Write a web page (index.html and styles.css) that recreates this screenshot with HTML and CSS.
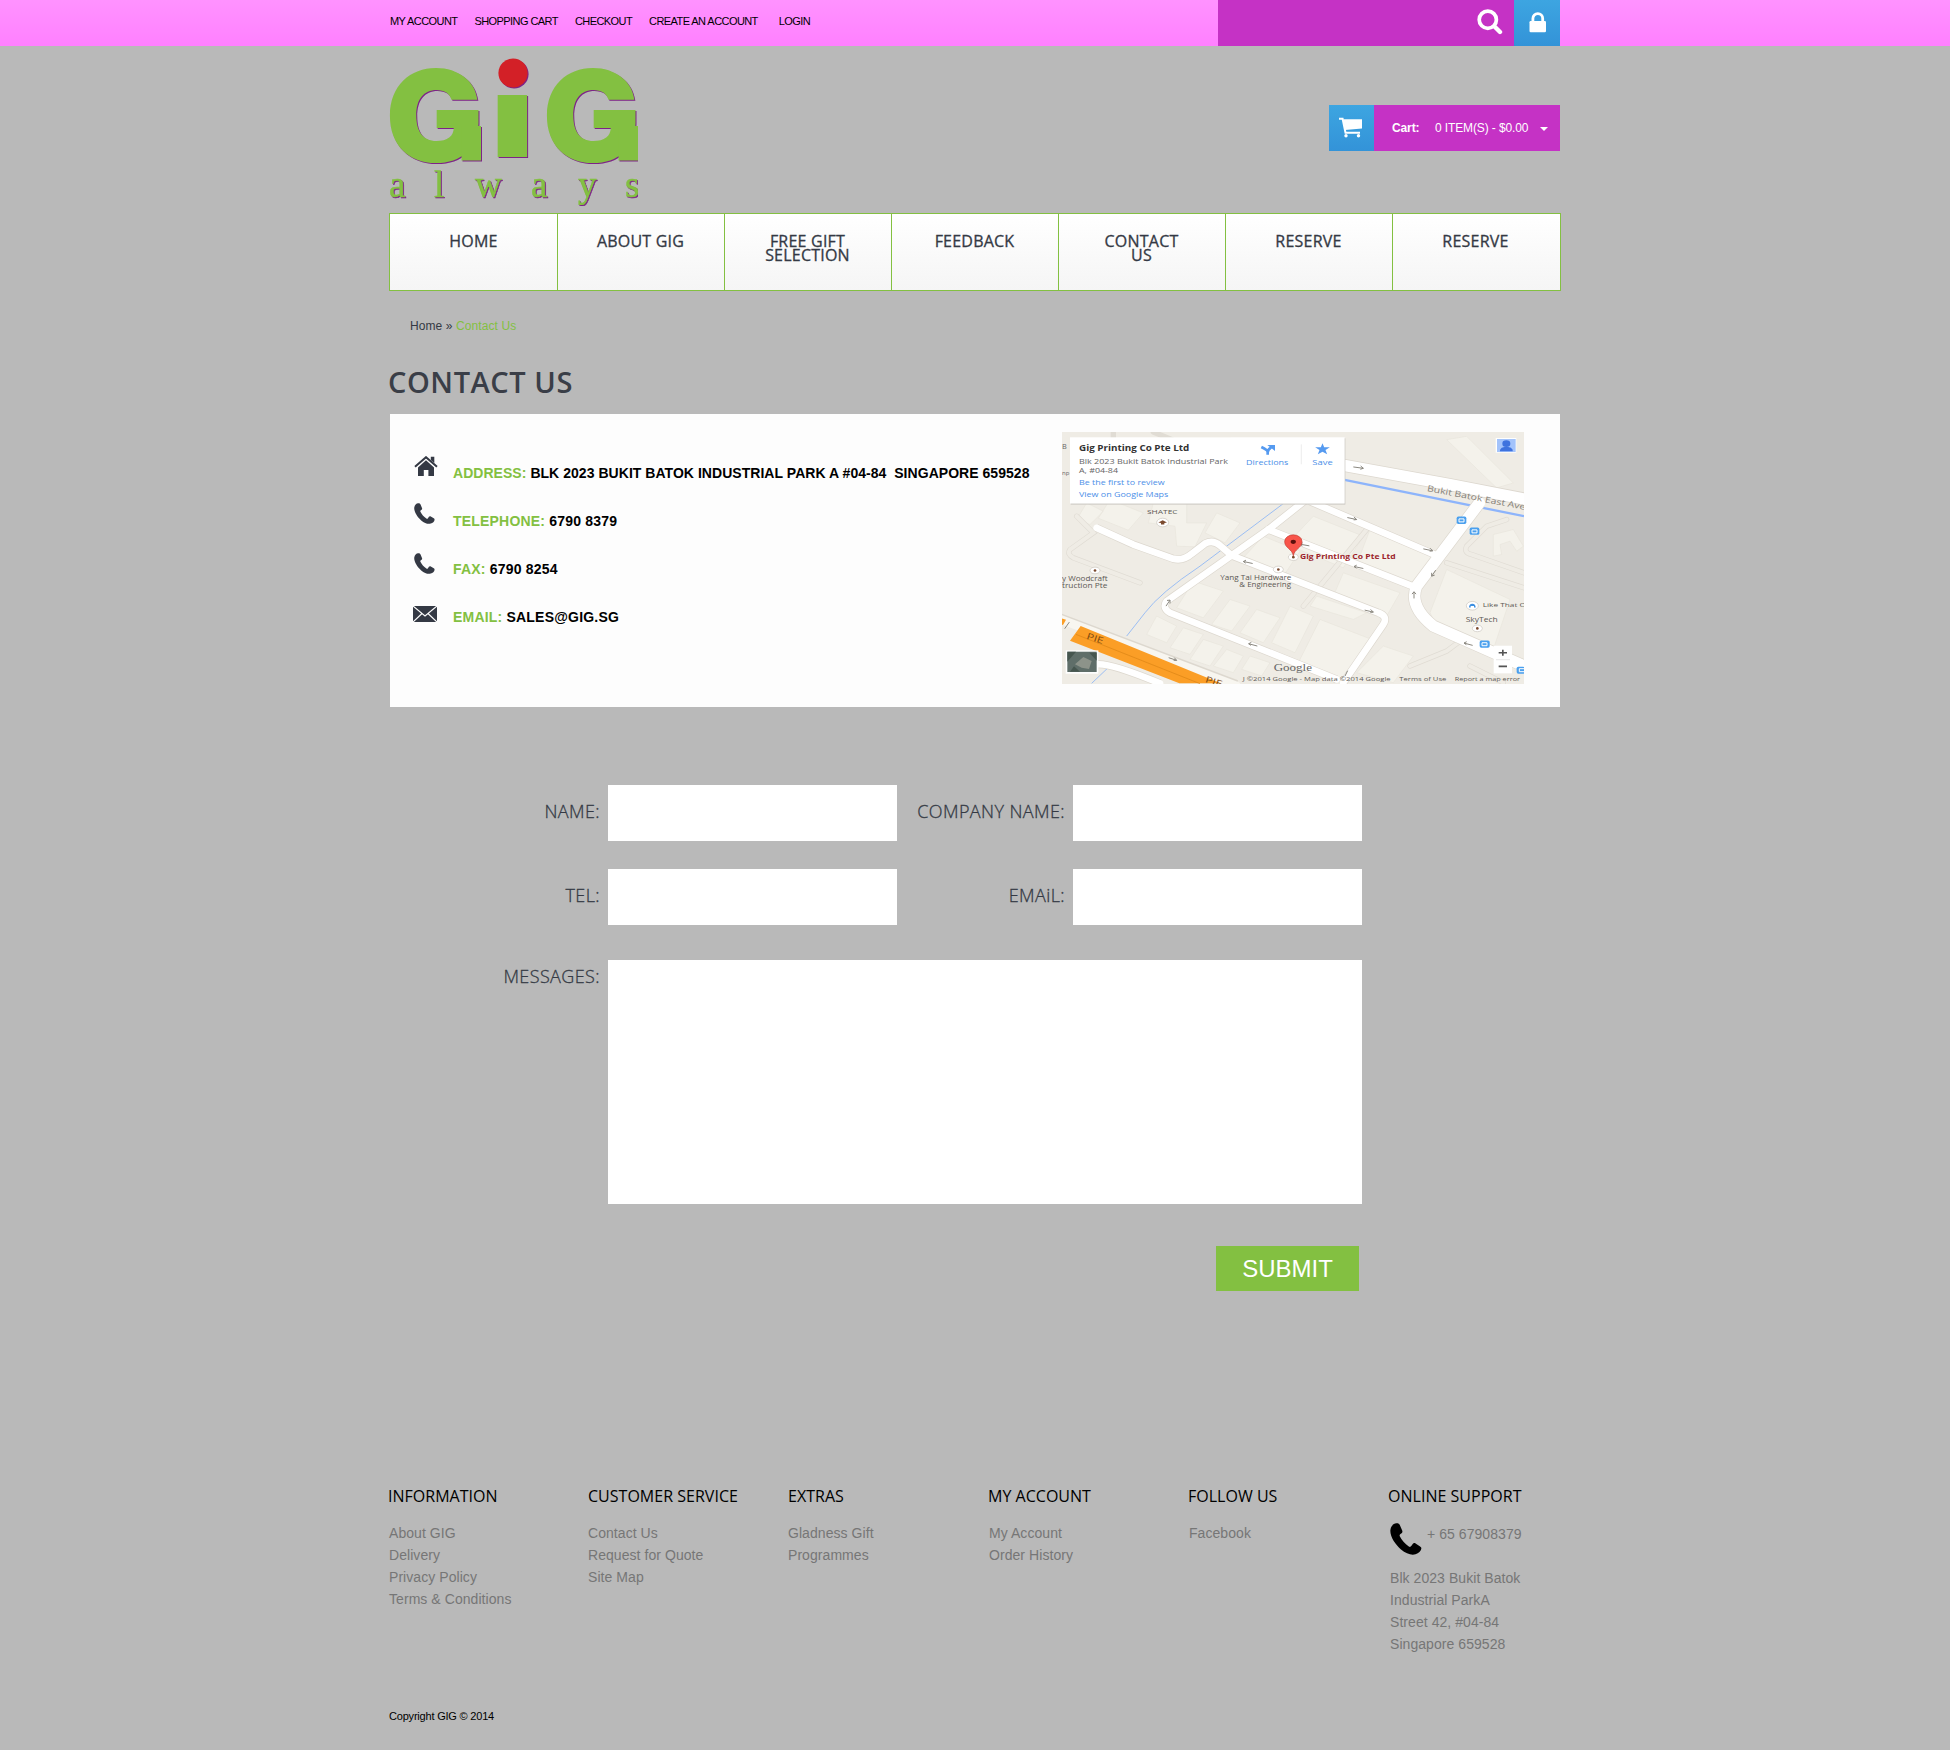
FILE: index.html
```html
<!DOCTYPE html>
<html lang="en">
<head>
<meta charset="utf-8">
<title>Contact Us - GIG</title>
<link rel="stylesheet" href="styles.css">
</head>
<body>
<svg class="defs" width="0" height="0">
  <symbol id="phone" viewBox="0 0 32 32"><path d="M6.3 .3C3.6 .6 1 2.600 .4 7c-.7 6 4.600 14.500 10.600 19.500C16 30.700 21.500 32.600 25.500 31.300c3.300-1 5.300-3 5.800-5.500.2-1.200-.3-1.800-1.200-2.400L25.600 20.500c-1.200-.7-2.200-.4-2.900.6l-1.400 2c-.7.9-1.500 1-2.500.4C15 21 11.500 17 9.800 13.300c-.4-1-.2-1.700.6-2.300l1.200-.8c.9-.7 1-1.500.6-2.600L9.800 2C9.300.8 8 .1 6.300.3z"/></symbol>
</svg>
<header>
  <div class="topbar">
    <div class="wrap topbar-in">
      <nav class="topnav"><a>MY ACCOUNT</a><a>SHOPPING CART</a><a>CHECKOUT</a><a>CREATE AN ACCOUNT</a><a>LOGIN</a></nav>
      <div class="search"><svg width="26" height="26" viewBox="0 0 26 26"><circle cx="10.800" cy="10.700" r="8.600" fill="none" stroke="#fff" stroke-width="3.700"/><path d="M17.500 17.500L23 23" stroke="#fff" stroke-width="4.400" stroke-linecap="round"/></svg></div>
      <div class="lock"><svg width="18" height="21" viewBox="0 0 18 21"><rect x=".5" y="9" width="16.500" height="11.300" rx="1.200" fill="#fff"/><path d="M3.900 10V6.500a4.900 4.900 0 0 1 9.800 0V10" fill="none" stroke="#fff" stroke-width="2.800"/></svg></div>
    </div>
  </div>
  <div class="wrap masthead">
    <svg class="logo" width="258" height="157" viewBox="380 50 258 157">
      <defs><clipPath id="stem"><rect x="490" y="95" width="45" height="80"/></clipPath></defs>
      <g class="logo-face">
        <text class="logo-g" transform="translate(385.500 162) scale(1.045 1.030)">G</text>
        <rect x="461.500" y="126" width="19.500" height="34.500"/>
        <g clip-path="url(#stem)"><text class="logo-i" transform="translate(482.800 157.300) scale(1.800 1)">i</text></g>
        <text class="logo-g" transform="translate(542.500 162) scale(1.045 1.030)">G</text>
        <rect x="618.500" y="126" width="19.500" height="34.500"/>
        <circle class="logo-dot" cx="513" cy="73" r="14.600"/>
        <text class="logo-word" y="196.500" x="389 434 475 531 578 625">always</text>
      </g>
    </svg>
    <div class="cart">
      <div class="cart-icon"><svg width="24" height="21" viewBox="0 0 24 21"><path d="M1 1.800h3.600L7.500 15.800H22" fill="none" stroke="#fff" stroke-width="2"/><path d="M5.300 2.200H24V11.500L7 13z" fill="#fff"/><circle cx="8" cy="18.800" r="1.700" fill="#fff"/><circle cx="20.500" cy="18.800" r="1.700" fill="#fff"/></svg></div>
      <b>Cart:</b><span>0 ITEM(S) - $0.00</span><i class="caret"></i>
    </div>
  </div>
</header>
<nav class="mainnav"><a>HOME</a><a>ABOUT GIG</a><a>FREE GIFT<br>SELECTION</a><a>FEEDBACK</a><a>CONTACT<br>US</a><a>RESERVE</a><a>RESERVE</a></nav>
<main class="wrap">
  <div class="crumbs"><a>Home</a> » <a class="here">Contact Us</a></div>
  <h1>CONTACT US</h1>
  <section class="panel">
    <ul class="details">
      <li><svg class="house" width="24" height="20" viewBox="0 0 24 20"><path d="M4 11.500L12 4.300l8 7.200V20h-5.600v-6H9.800v6H4z"/><path d="M1 10.700L12 1.200l11 9.500" fill="none" stroke="#343944" stroke-width="2"/><path d="M16.800 .7H20.300V7L16.800 4z"/></svg><span><b>ADDRESS:</b> <em>BLK 2023 BUKIT BATOK INDUSTRIAL PARK A #04-84&nbsp; SINGAPORE 659528</em></span></li>
      <li class="wide"><svg class="tel" width="21" height="21"><use href="#phone"/></svg><span><b>TELEPHONE:</b> <em>6790 8379</em></span></li>
      <li class="wide"><svg class="fax" width="21" height="21"><use href="#phone"/></svg><span><b>FAX:</b> <em>6790 8254</em></span></li>
      <li class="wide"><svg class="mail" width="24" height="16" viewBox="0 0 24 16"><rect width="24" height="16" rx="1"/><path d="M0 0L12 10L24 0M0 16L9 7.500M24 16L15 7.500" fill="none" stroke="#fdfdfd" stroke-width="1.200"/></svg><span><b>EMAIL:</b> <em>SALES@GIG.SG</em></span></li>
    </ul>
    <svg class="map" width="462" height="252" viewBox="36 37 1386 757" preserveAspectRatio="none">
      <rect x="36" y="37" width="1386" height="757" fill="#efece5"/>
      <g fill="#f4f2eb" stroke="#e8e5dd" stroke-width="2">
        <path d="M180 240l100 40-45 52-90-36zM110 250l50 25-40 40-40-15zM310 250h100v60h60l-35 72-55-2-5-60-80-10zM500 280l70 30-45 60-60-30zM790 290l150 60-60 95-170-70zM960 330l190 75-60 90-170-60zM640 350l110 45-50 75-130-45zM880 460l170 60-40 70-160-60zM800 530l150 50-40 20-130-40zM430 485l90 30-60 80-80-30zM540 540l60 20-55 75-60-20zM620 570l70 25-50 75-70-30zM720 560l70 30-55 110-70-30zM810 600l155 60-80 120-140-50zM320 590l60 30-30 50-60-25zM400 625l60 20-40 60-60-20zM460 660l60 20-40 60-60-20zM530 690l50 20-30 50-60-20zM600 710l60 20-25 40-60-20zM1000 680l90 30-60 80-110-30zM1190 450l190 90-50 150-160-50-30-60zM1190 60l60-10 140 140-50 15z"/>
        <path d="M1330 345l60-15 30 50-20 15-20-30-30 10 5 30-25 5z"/>
      </g>
      <g fill="none" stroke="#e0dcd4" stroke-width="16" stroke-linecap="round"><path d="M80 290l50 50-70 50q-10 15 10 25l200 75M950 330L760 560M1370 300l-60 20-60 60q-10 20 15 25l157 55M1190 430l232 75M1080 740l110-45 40-30M1260 740l100 50M190 40v60M310 37l60 25H540"/></g>
      <g fill="none" stroke="#efece5" stroke-width="12" stroke-linecap="round"><path d="M80 290l50 50-70 50q-10 15 10 25l200 75M950 330L760 560M1370 300l-60 20-60 60q-10 20 15 25l157 55M1190 430l232 75M1080 740l110-45 40-30M1260 740l100 50"/></g>
      <path d="M700 252L450 440Q330 520 285 580L230 650M185 735L125 792" fill="none" stroke="#8ab4f5" stroke-width="2.500"/>
      <path d="M880 180L1422 290" stroke="#8db4fb" stroke-width="7" fill="none"/><path d="M1310 260L1422 282" stroke="#efece5" stroke-width="2" fill="none"/>
      <g fill="none" stroke="#ddd8cf" stroke-linejoin="round">
        <path d="M870 135L1200 195 1422 238" stroke-width="39"/>
        <path d="M140 325L250 375 370 418Q400 425 425 403L465 372Q490 360 510 378L545 408 985 580Q1015 590 1000 615L880 790" stroke-width="24"/>
        <path d="M800 215L655 330 350 545Q335 565 360 580L860 780" stroke-width="24"/><path d="M655 330L1100 505M780 245L1170 412" stroke-width="24"/>
        <path d="M1288 250L1100 500Q1075 560 1150 620L1422 740" stroke-width="38"/>
        <path d="M20 590L560 794M140 735Q180 730 330 792" stroke-width="24"/>
      </g>
      <g fill="none" stroke="#fff" stroke-linejoin="round" stroke-linecap="round">
        <path d="M870 135L1200 195 1422 238" stroke-width="34"/>
        <path d="M140 325L250 375 370 418Q400 425 425 403L465 372Q490 360 510 378L545 408 985 580Q1015 590 1000 615L880 790" stroke-width="20"/>
        <path d="M800 215L655 330 350 545Q335 565 360 580L860 780" stroke-width="20"/><path d="M655 330L1100 505M780 245L1170 412" stroke-width="20"/>
        <path d="M1288 250L1100 500Q1075 560 1150 620L1422 740" stroke-width="34"/>
        <path d="M20 595L560 800" stroke-width="26" stroke="#f8f6f0"/><path d="M140 735Q180 730 330 792" stroke-width="20"/>
      </g>
      <path d="M92 620L512 792H388L60 664zM36 597l12 4-9 16-3-1z" fill="#fb9e26"/><path d="M78 645L450 793" stroke="#d98315" stroke-width="2"/>
      <g fill="none" stroke="#8b8880" stroke-width="3"><path d="M910 142l30 4m-8-7l8 7-9 3M892 294l28 6m-8-8l8 8-9 1M1120 388l28 6m-8-8l8 8-9 1M778 379l-28-5m8-4l-8 4 7 5M608 432l-28-6m8-4l-8 4 7 5M940 447l-28-6m8-4l-8 4 7 5M944 572l26 6m-8-8l8 8-9 1M622 680l-26-7m8-4l-8 4 7 5M1145 470l12-18m-12 8v10l9-3M348 560l12-18m-9 1l9-1v10M1092 537v-20m-6 7l6-7 6 7M1268 678l-26-7m8-4l-8 4 7 5M356 715l24 8m-7-8l7 8-9 0M885 770l8-16M44 628l14-20"/></g>
      <g class="map-label">
        <text x="291" y="284" font-size="17" textLength="92" lengthAdjust="spacingAndGlyphs">SHATEC</text>
        <text x="511" y="482" font-size="19" textLength="213" lengthAdjust="spacingAndGlyphs">Yang Tai Hardware</text>
        <text x="568" y="502" font-size="19" textLength="155" lengthAdjust="spacingAndGlyphs">&amp; Engineering</text>
        <text x="36" y="484" font-size="19" textLength="137" lengthAdjust="spacingAndGlyphs">y Woodcraft</text>
        <text x="36" y="505" font-size="19" textLength="136" lengthAdjust="spacingAndGlyphs">truction Pte</text>
        <text x="1298" y="564" font-size="18" textLength="130" lengthAdjust="spacingAndGlyphs">Like That O</text>
        <text x="1247" y="608" font-size="19" textLength="96" lengthAdjust="spacingAndGlyphs">SkyTech</text>
        <text transform="translate(1130 214) rotate(11)" font-size="25" fill="#857f78" textLength="300" lengthAdjust="spacingAndGlyphs">Bukit Batok East Ave</text>
        <text transform="translate(108 658) rotate(18)" font-size="27" fill="#7c4a10" textLength="52" lengthAdjust="spacingAndGlyphs">PIE</text>
        <text transform="translate(464 788) rotate(18)" font-size="27" fill="#7c4a10" textLength="52" lengthAdjust="spacingAndGlyphs">PIE</text>
      </g>
      <g fill="#fff" stroke="#c9c4bc" stroke-width="2"><ellipse cx="338" cy="309" rx="18" ry="13"/><ellipse cx="135" cy="453" rx="15" ry="10"/><ellipse cx="685" cy="450" rx="15" ry="10"/><ellipse cx="730" cy="413" rx="15" ry="10"/><ellipse cx="1282" cy="627" rx="15" ry="10"/><ellipse cx="1267" cy="559" rx="18" ry="13"/></g>
      <path d="M325 309l13-7 13 7-8 1v5h-10v-5z" fill="#7b4a2e"/><g fill="#7b4a2e"><circle cx="135" cy="453" r="4"/><circle cx="685" cy="450" r="4"/><circle cx="730" cy="413" r="4"/><circle cx="1282" cy="627" r="4"/></g><path d="M1257 564q0-10 10-11 10 1 10 11h-5v-4h-10v4z" fill="#3d8fe0"/>
      <g fill="#4ba0ee"><rect x="1220" y="291" width="29" height="22" rx="5"/><rect x="1259" y="324" width="29" height="22" rx="5"/><rect x="1289" y="663" width="30" height="22" rx="5"/><rect x="1400" y="742" width="24" height="21" rx="5"/></g>
      <g fill="none" stroke="#fff" stroke-width="3"><path d="M1227 298h15v9h-15zM1266 331h15v9h-15zM1296 670h15v9h-15zM1408 748h16v9h-16z"/></g>
      <path d="M730 409C727 388 704 386 704 366a26 20 0 0 1 52 0C756 386 733 388 730 409z" fill="#f8544a" stroke="#c33a31" stroke-width="2"/><ellipse cx="730" cy="367" rx="8" ry="6.500" fill="#5b100c"/>
      <text class="map-pin" x="750" y="420" font-size="20" textLength="287" lengthAdjust="spacingAndGlyphs">Gig Printing Co Pte Ltd</text>
      <text x="36" y="87" font-size="22" fill="#666">B</text><text x="36" y="166" font-size="18" fill="#666">np</text>
      <rect x="62" y="56" width="824" height="199" fill="#c9c6c0"/><rect x="60" y="53" width="824" height="199" fill="#fff"/>
      <path d="M754 74v60" stroke="#e4e4e4" stroke-width="2"/>
      <g class="map-card">
        <text x="87" y="95" font-size="25" font-weight="bold" fill="#333" textLength="331" lengthAdjust="spacingAndGlyphs">Gig Printing Co Pte Ltd</text>
        <text x="87" y="133" font-size="22" fill="#666" textLength="447" lengthAdjust="spacingAndGlyphs">Blk 2023 Bukit Batok Industrial Park</text>
        <text x="87" y="160" font-size="22" fill="#666" textLength="117" lengthAdjust="spacingAndGlyphs">A, #04-84</text>
        <text x="87" y="195" font-size="22" textLength="257" lengthAdjust="spacingAndGlyphs">Be the first to review</text>
        <text x="87" y="231" font-size="22" textLength="268" lengthAdjust="spacingAndGlyphs">View on Google Maps</text>
        <text x="588" y="136" font-size="21" textLength="127" lengthAdjust="spacingAndGlyphs">Directions</text>
        <text x="787" y="136" font-size="21" textLength="61" lengthAdjust="spacingAndGlyphs">Save</text>
      </g>
      <path d="M817.500 71l5 12h17l-13 8 5 13-14-8-14 8 5-13-13-8h17z" fill="#559af0"/>
      <path d="M653 105V96Q652 91 634 82M653 100Q652 90 664 83" fill="none" stroke="#559af0" stroke-width="8"/><path d="M652 76h23v18z" fill="#559af0"/>
      <rect x="1337" y="55" width="62" height="44" fill="#fff"/><rect x="1341" y="58" width="56" height="39" fill="#a3c3fb"/><ellipse cx="1369" cy="72" rx="12" ry="10" fill="#3e72de"/><path d="M1350 95v-5q4-8 13-8h12q9 0 13 8v5z" fill="#3e72de"/>
      <rect x="1331" y="679" width="55" height="83" fill="#fff"/><path d="M1338 721h42" stroke="#ddd" stroke-width="2"/><path d="M1346 700h25M1358.500 691v18M1346 741h25" stroke="#555" stroke-width="5"/>
      <rect x="47" y="693" width="98" height="70" fill="#fff"/><rect x="52" y="697" width="88" height="61" fill="#5f6e69"/><path d="M75 735l25-22 25 12-8 24-22-4z" fill="#8d938a"/><path d="M52 697h26l-26 30zM118 700h22v24zM60 757l12-16 18 16z" fill="#46564f"/>
      <text class="map-brand" x="671" y="754" font-size="30" textLength="115" lengthAdjust="spacingAndGlyphs">Google</text>
      <g class="map-label" font-size="17">
        <text x="578" y="786" textLength="444" lengthAdjust="spacingAndGlyphs">J ©2014 Google - Map data ©2014 Google</text>
        <text x="1048" y="786" textLength="141" lengthAdjust="spacingAndGlyphs">Terms of Use</text>
        <text x="1214" y="786" textLength="196" lengthAdjust="spacingAndGlyphs">Report a map error</text>
      </g>
    </svg>
  </section>
  <form class="form">
    <label>NAME:</label><div class="field"></div><label>COMPANY NAME:</label><div class="field"></div>
    <label>TEL:</label><div class="field"></div><label>EMAiL:</label><div class="field"></div>
    <label class="msg">MESSAGES:</label><div class="field area"></div>
    <button class="submit" type="button">SUBMIT</button>
  </form>
</main>
<footer class="wrap">
  <div class="cols">
    <section><h2>INFORMATION</h2><a>About GIG</a><a>Delivery</a><a>Privacy Policy</a><a>Terms &amp; Conditions</a></section>
    <section class="nudge"><h2>CUSTOMER SERVICE</h2><a>Contact Us</a><a>Request for Quote</a><a>Site Map</a></section>
    <section class="nudge"><h2>EXTRAS</h2><a>Gladness Gift</a><a>Programmes</a></section>
    <section><h2>MY ACCOUNT</h2><a>My Account</a><a>Order History</a></section>
    <section><h2>FOLLOW US</h2><a>Facebook</a></section>
    <section><h2>ONLINE SUPPORT</h2>
      <div class="support"><svg width="32" height="32"><use href="#phone"/></svg><span>+ 65 67908379</span></div>
      <address>Blk 2023 Bukit Batok<br>Industrial ParkA<br>Street 42, #04-84<br>Singapore 659528</address></section>
  </div>
  <p class="copy">Copyright GIG © 2014</p>
</footer>
</body>
</html>
```
FILE: styles.css
```css
* { box-sizing: border-box; }
body { margin: 0; background: #b9b9b9; font: 14px/22px "Liberation Sans", Arial, sans-serif; color: #000; }
.defs { display: block; }
.wrap { width: 1170px; margin: 0 auto; }

.topbar { height: 46px; background: linear-gradient(#ff92ff, #ff80ff); }
.topbar-in { display: flex; height: 46px; }
.topnav { display: flex; flex: 1; gap: 17px; font-size: 11px; line-height: 42px; letter-spacing: -.57px; white-space: nowrap; }
.topnav a:last-child { margin-left: 4px; }
.search { width: 296px; background: #c532c5; padding: 9px 11px 0 0; display: flex; justify-content: flex-end; }
.lock { width: 46px; background: linear-gradient(#3da5e1, #3393d8); padding: 12px 0 0 14.5px; }

.masthead { display: flex; justify-content: space-between; align-items: flex-start; height: 167px; }
.logo { display: block; margin: 4px 0 0 -10px; flex: none; }
.logo-g { font: 900 124px Inter, "Liberation Sans", sans-serif; }
.logo-i { font: bold 119px "Liberation Sans", Arial, sans-serif; }
.logo-word { font: 37px "Liberation Serif", serif; stroke-width: .5px; }
.logo-face { fill: #83c041; stroke: #83c041; stroke-width: 0; filter: drop-shadow(1px 1.5px 0 #7d2387); }
.logo-face .logo-dot { fill: #d32027; }
.cart { display: flex; align-items: center; width: 231px; height: 46px; margin-top: 59px; background: #c532c5; color: #fff; font-size: 12px; letter-spacing: -.12px; white-space: nowrap; }
.cart-icon { width: 45px; height: 46px; padding: 12px 0 0 9px; margin-right: 18px; background: linear-gradient(#3da5e1, #3393d8); }
.cart b { width: 43px; }
.cart span { width: 105px; }
.caret { border: 4px solid transparent; border-top-color: #fff; border-bottom: 0; margin-top: 2px; }

.mainnav { display: grid; grid-template-columns: 168px repeat(5, 167px) 169px; width: 1172px; height: 78px; margin: 0 auto; border: solid #83c041; border-width: 1px 0; background: linear-gradient(#fff, #f5f5f5); }
.mainnav a { border-left: 1px solid #83c041; padding: 20px 1px 0 0; text-align: center; font: 400 16px/14px "Open Sans", sans-serif; letter-spacing: .22px; color: #343944; -webkit-text-stroke: .3px #343944; }
.mainnav a:first-child { padding-right: 0; }
.mainnav a:last-child { border-right: 1px solid #83c041; padding-right: 2px; }

.crumbs { padding: 24px 0 0 20px; font-size: 12px; letter-spacing: .09px; color: #343944; }
.crumbs .here { color: #83c041; }
h1 { margin: 25px 0 0 -2px; font: 600 29px/40px "Open Sans", sans-serif; letter-spacing: .57px; color: #3a3e47; }
.panel { display: flex; justify-content: space-between; height: 293px; margin-top: 12px; padding: 18px 36px 0 24px; background: #fdfdfd; }
.details { list-style: none; margin: 0; padding: 30px 0 0; fill: #343944; font-weight: bold; letter-spacing: .04px; white-space: nowrap; }
.details li { display: grid; grid-template-columns: 39px 1fr; height: 48px; }
.details .wide { letter-spacing: .2px; }
.details b { color: #83c041; }
.details em { font-style: normal; }
.house { margin-top: -6px; }
.tel { margin-top: -7px; }
.fax { margin-top: -5px; }
.mail { margin: 0 0 0 -1px; }
.map { display: block; flex: none; }
.map text { font-family: "Open Sans", sans-serif; }
.map .map-brand { font-family: "Liberation Serif", serif; fill: #666; }
.map-label { fill: #5c5854; }
.map-pin { fill: #9c1f2c; font-weight: bold; }
.map-card { fill: #4c8fe8; }

.form { display: grid; grid-template-columns: 218px 289px 176px 289px; grid-template-rows: 56px 56px 251px 59px; row-gap: 28px; margin-top: 78px; }
.form label { padding-right: 8px; text-align: right; font: 300 18px/52px "Open Sans", sans-serif; letter-spacing: .4px; white-space: nowrap; color: #343944; -webkit-text-stroke: .3px #343944; }
.form .field { background: #fff; }
.form .area { grid-column: 2 / 5; margin-top: 7px; }
.form .msg { padding-top: 7px; line-height: 33px; }
.form .submit { grid-column: 4; width: 143px; height: 45px; margin: 14px 0 0 143px; padding: 0; border: 0; background: #83c041; color: #fff; font: 24px/45px "Liberation Sans", Arial, sans-serif; }

.cols { display: grid; grid-template-columns: 200px 200px 200px 200px 200px 1fr; height: 220px; margin-top: 194px; color: #767676; letter-spacing: .06px; }
.cols section { margin-left: -1px; white-space: nowrap; }
.cols .nudge { margin-left: -2px; }
.cols h2 { margin: 0 0 15px -1px; font: 400 16px/22px "Open Sans", sans-serif; letter-spacing: .02px; color: #000; }
.cols .nudge h2 { margin-left: 0; }
.cols a { display: block; }
.support { display: flex; gap: 5px; height: 45px; padding: 1px 0 0 1px; }
address { margin-left: 1px; font-style: normal; }
.copy { margin: 0 0 0 -1px; font-size: 11px; letter-spacing: -.2px; }
```
